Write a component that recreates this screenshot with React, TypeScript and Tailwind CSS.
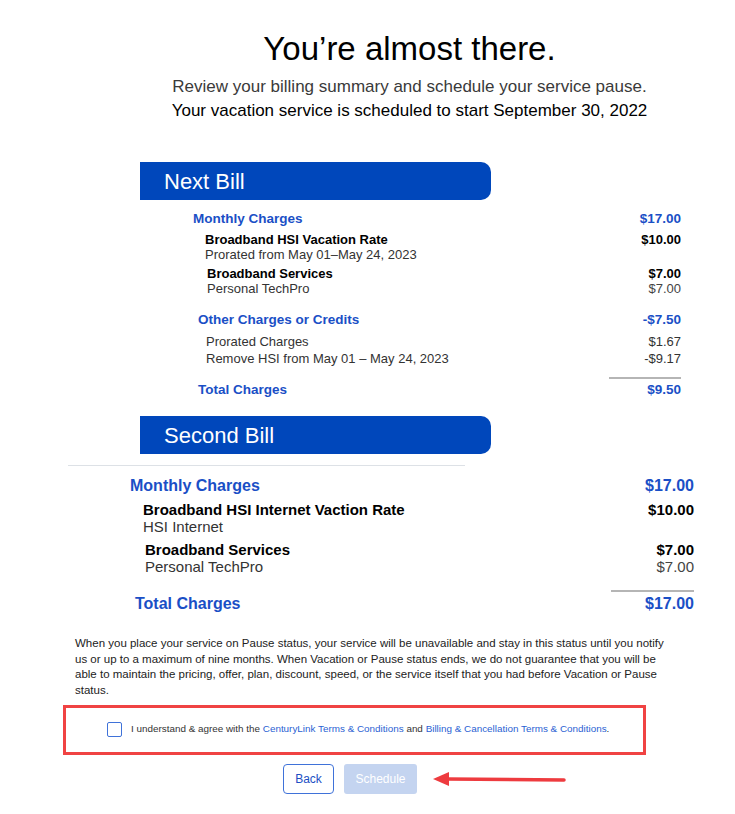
import React from 'react';

function Banner({ title }: { title: string }) {
  return (
    <div className="ml-[140px] flex h-[38px] w-[351px] items-center rounded-r-[10px] bg-[#0047bb] pl-[24px] text-[22px] text-white">
      {title}
    </div>
  );
}

export default function App() {
  return (
    <div className="min-h-[814px] w-[735px] bg-white font-['Liberation_Sans',Arial,sans-serif] text-black">
      {/* Header */}
      <header className="pl-[84px] pt-[29px] text-center">
        <h1 className="text-[33px] leading-[40px]">You’re almost there.</h1>
        <p className="mt-[6px] text-[17px] leading-[24px] text-[#3a3a3a]">
          Review your billing summary and schedule your service pause.
        </p>
        <p className="text-[17px] leading-[24px] text-black">
          Your vacation service is scheduled to start September 30, 2022
        </p>
      </header>

      {/* Next Bill */}
      <div className="mt-[39px]">
        <Banner title="Next Bill" />
        <div className="ml-[193px] w-[488px]">
          <div className="mt-[10px] flex justify-between text-[13.5px] font-bold leading-[18px] text-[#1a4fc6]">
            <span>Monthly Charges</span>
            <span>$17.00</span>
          </div>
          <div className="mt-[4px] flex justify-between pl-[12px] text-[13px] leading-[15px]">
            <div>
              <div className="font-bold">Broadband HSI Vacation Rate</div>
              <div className="text-[#333]">Prorated from May 01–May 24, 2023</div>
            </div>
            <span className="font-bold">$10.00</span>
          </div>
          <div className="mt-[4px] flex justify-between pl-[14px] text-[13px] leading-[15px]">
            <div>
              <div className="font-bold">Broadband Services</div>
              <div className="text-[#333]">Personal TechPro</div>
            </div>
            <div className="text-right">
              <div className="font-bold">$7.00</div>
              <div className="text-[#444]">$7.00</div>
            </div>
          </div>
          <div className="mt-[15px] flex justify-between pl-[5px] text-[13.5px] font-bold leading-[18px] text-[#1a4fc6]">
            <span>Other Charges or Credits</span>
            <span>-$7.50</span>
          </div>
          <div className="mt-[4px] flex justify-between pl-[13px] text-[13px] leading-[17px] text-[#333]">
            <div>
              <div>Prorated Charges</div>
              <div>Remove HSI from May 01 – May 24, 2023</div>
            </div>
            <div className="text-right">
              <div>$1.67</div>
              <div>-$9.17</div>
            </div>
          </div>
          <div className="ml-auto mt-[10px] h-[2px] w-[72px] bg-[#b5b5b5]" />
          <div className="mt-[2px] flex justify-between pl-[5px] text-[13.5px] font-bold leading-[18px] text-[#1a4fc6]">
            <span>Total Charges</span>
            <span>$9.50</span>
          </div>
        </div>
      </div>

      {/* Second Bill */}
      <div className="mt-[17px]">
        <Banner title="Second Bill" />
        <div className="ml-[68px] mt-[11px] h-px w-[397px] bg-[#dde1e6]" />
        <div className="ml-[130px] w-[564px]">
          <div className="mt-[10px] flex justify-between text-[16px] font-bold leading-[20px] text-[#1a4fc6]">
            <span>Monthly Charges</span>
            <span>$17.00</span>
          </div>
          <div className="mt-[5px] flex justify-between pl-[13px] text-[15px] leading-[17px]">
            <div>
              <div className="font-bold">Broadband HSI Internet Vaction Rate</div>
              <div className="text-[#333]">HSI Internet</div>
            </div>
            <span className="font-bold">$10.00</span>
          </div>
          <div className="mt-[6px] flex justify-between pl-[15px] text-[15px] leading-[17px]">
            <div>
              <div className="font-bold">Broadband Services</div>
              <div className="text-[#333]">Personal TechPro</div>
            </div>
            <div className="text-right">
              <div className="font-bold">$7.00</div>
              <div className="text-[#444]">$7.00</div>
            </div>
          </div>
          <div className="ml-auto mt-[15px] h-[2px] w-[83px] bg-[#b5b5b5]" />
          <div className="mt-[2px] flex justify-between pl-[5px] text-[16px] font-bold leading-[20px] text-[#1a4fc6]">
            <span>Total Charges</span>
            <span>$17.00</span>
          </div>
        </div>
      </div>

      {/* Disclaimer */}
      <p className="ml-[75px] mt-[22px] w-[592px] text-[11.5px] leading-[15.7px] text-[#222]">
        When you place your service on Pause status, your service will be unavailable and stay in this status until you notify
        us or up to a maximum of nine months. When Vacation or Pause status ends, we do not guarantee that you will be
        able to maintain the pricing, offer, plan, discount, speed, or the service itself that you had before Vacation or Pause
        status.
      </p>

      {/* Agreement */}
      <div className="ml-[63px] mt-[6px] flex h-[50px] w-[583px] items-center border-[3px] border-[#f04343] pl-[41px]">
        <span className="h-[15px] w-[15px] rounded-[2px] border-[1.5px] border-[#3f72d9]" />
        <span className="ml-[9px] text-[9.9px] text-[#333]">
          I understand &amp; agree with the <span className="text-[#2a5fd3]">CenturyLink Terms &amp; Conditions</span> and{' '}
          <span className="text-[#2a5fd3]">Billing &amp; Cancellation Terms &amp; Conditions</span>.
        </span>
      </div>

      {/* Actions */}
      <div className="ml-[283px] mt-[9px] flex items-center">
        <button className="h-[30px] w-[51px] rounded-[4px] border-[1.5px] border-[#3f72d9] text-[12px] text-[#1d4fc4]">
          Back
        </button>
        <button className="ml-[10px] h-[30px] w-[73px] rounded-[3px] bg-[#c4d4f0] text-[12px] text-white">
          Schedule
        </button>
        <svg className="ml-[16px]" width="134" height="20" viewBox="0 0 134 20">
          <line x1="14" y1="10" x2="131" y2="11" stroke="#ee3b3f" strokeWidth="3.5" strokeLinecap="round" />
          <polygon points="0,10 16,3 16,17" fill="#ee3b3f" />
        </svg>
      </div>
    </div>
  );
}
